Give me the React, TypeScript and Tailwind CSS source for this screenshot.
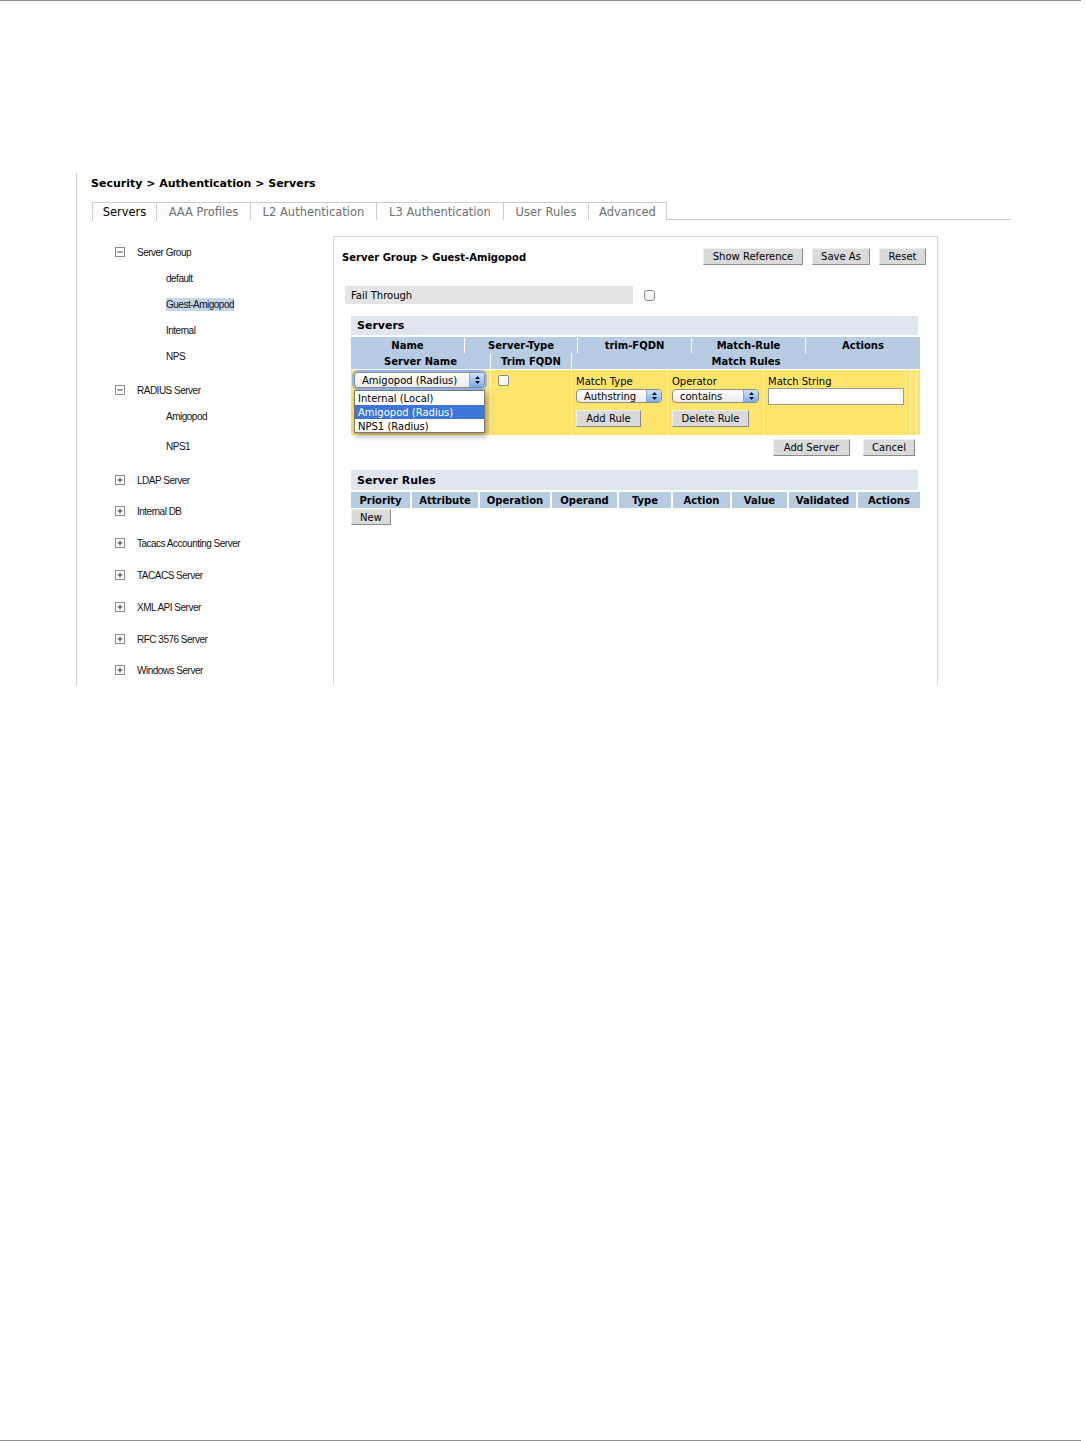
import React from "react";

const VER = "font-['DejaVu_Sans',sans-serif]";
const TAH = "font-['Liberation_Sans',Arial,sans-serif]";

function TreeIcon({ plus }: { plus?: boolean }) {
  return (
    <svg width="10" height="10" viewBox="0 0 10 10" className="shrink-0">
      <rect x="0.5" y="0.5" width="9" height="9" fill="#fff" stroke="#8a8a8a" />
      <line x1="2.5" y1="5" x2="7.5" y2="5" stroke="#333" strokeWidth="1" />
      {plus && <line x1="5" y1="2.5" x2="5" y2="7.5" stroke="#333" strokeWidth="1" />}
    </svg>
  );
}

function Arrows() {
  return (
    <svg width="7" height="10" viewBox="0 0 7 10">
      <path d="M1 4 L3.5 1 L6 4 Z" fill="#111" />
      <path d="M1 6 L3.5 9 L6 6 Z" fill="#111" />
    </svg>
  );
}

function Sel({ cls, text, ring }: { cls: string; text: string; ring?: boolean }) {
  return (
    <div
      className={`relative flex items-center rounded-[4px] border border-[#8c8c8c] bg-gradient-to-b from-white to-[#ebebeb] ${cls} ${
        ring ? "shadow-[0_0_0_2px_#8fb6ee]" : ""
      }`}
    >
      <span className={`${VER} text-[10px] leading-none text-black pl-[7px] pt-px whitespace-nowrap`}>{text}</span>
      <div className="absolute right-0 top-0 bottom-0 w-[15px] rounded-r-[3px] bg-gradient-to-b from-[#cfe3fb] to-[#79acec] border-l border-[#8aa8d0] flex items-center justify-center">
        <Arrows />
      </div>
    </div>
  );
}

function Btn({ cls, children }: { cls: string; children: React.ReactNode }) {
  return (
    <div
      className={`flex items-center justify-center pt-px bg-[#dadada] border border-t-[#efefef] border-l-[#efefef] border-r-[#8a8a8a] border-b-[#8a8a8a] text-black whitespace-nowrap ${VER} text-[10px] leading-none ${cls}`}
    >
      {children}
    </div>
  );
}

function Check({ cls }: { cls?: string }) {
  return (
    <div
      className={`w-[11px] h-[11px] rounded-[2px] border border-[#8a8a8a] bg-gradient-to-b from-white to-[#eeeeee] shrink-0 ${cls ?? ""}`}
    />
  );
}

type TreeItem = { label: string; level: 0 | 1; icon?: "minus" | "plus"; mt: string; sel?: boolean };

const tree: TreeItem[] = [
  { label: "Server Group", level: 0, icon: "minus", mt: "mt-0" },
  { label: "default", level: 1, mt: "mt-[12px]" },
  { label: "Guest-Amigopod", level: 1, mt: "mt-[12px]", sel: true },
  { label: "Internal", level: 1, mt: "mt-[12px]" },
  { label: "NPS", level: 1, mt: "mt-[12px]" },
  { label: "RADIUS Server", level: 0, icon: "minus", mt: "mt-[20px]" },
  { label: "Amigopod", level: 1, mt: "mt-[12px]" },
  { label: "NPS1", level: 1, mt: "mt-[16px]" },
  { label: "LDAP Server", level: 0, icon: "plus", mt: "mt-[20px]" },
  { label: "Internal DB", level: 0, icon: "plus", mt: "mt-[17px]" },
  { label: "Tacacs Accounting Server", level: 0, icon: "plus", mt: "mt-[18px]" },
  { label: "TACACS Server", level: 0, icon: "plus", mt: "mt-[18px]" },
  { label: "XML API Server", level: 0, icon: "plus", mt: "mt-[18px]" },
  { label: "RFC 3576 Server", level: 0, icon: "plus", mt: "mt-[18px]" },
  { label: "Windows Server", level: 0, icon: "plus", mt: "mt-[17px]" },
];

const tabs = [
  { label: "Servers", w: "w-[65px]", active: true },
  { label: "AAA Profiles", w: "w-[94px]" },
  { label: "L2 Authentication", w: "w-[126px]" },
  { label: "L3 Authentication", w: "w-[127px]" },
  { label: "User Rules", w: "w-[85px]" },
  { label: "Advanced", w: "w-[78px]" },
];

const ruleCols = [
  { label: "Priority", w: "w-[61px]" },
  { label: "Attribute", w: "w-[68px]" },
  { label: "Operation", w: "w-[72px]" },
  { label: "Operand", w: "w-[67px]" },
  { label: "Type", w: "w-[54px]" },
  { label: "Action", w: "w-[59px]" },
  { label: "Value", w: "w-[57px]" },
  { label: "Validated", w: "w-[69px]" },
  { label: "Actions", w: "w-[62px]" },
];

export default function App() {
  return (
    <div className="w-[1085px] h-[1441px] bg-white flex flex-col overflow-hidden">
      <div className="h-px w-[1081px] bg-[#8e8e8e] shrink-0" />

      <div className="ml-[76px] mt-[172px] h-[512px] border-l border-[#d0d0d0] pl-[15px] shrink-0">
        {/* breadcrumb */}
        <div className={`${VER} pt-[4px] -ml-px h-[18px] text-[11px] leading-[14px] font-bold text-black whitespace-nowrap`}>
          Security &gt; Authentication &gt; Servers
        </div>

        {/* tabs */}
        <div className="mt-[11px] w-[918px] h-[18px] flex border-b border-[#cccccc]">
          {tabs.map((t, i) => (
            <div
              key={t.label}
              className={`${t.w} ${
                t.active ? "h-[19px] bg-white text-black" : "h-[18px] bg-white text-[#6f6f6f]"
              } ${i === 0 ? "border-l" : ""} border-t border-r border-[#cccccc] flex items-center justify-center pt-[2px] ${VER} text-[11.5px] leading-none whitespace-nowrap`}
            >
              {t.label}
            </div>
          ))}
        </div>

        <div className="flex">
          {/* left tree */}
          <div className={`w-[241px] pt-[25px] ${TAH} text-[10px] tracking-[-0.5px] text-[#111]`}>
            {tree.map((it) => (
              <div
                key={it.label}
                className={`${it.mt} h-[14px] flex items-center ${it.level === 0 ? "pl-[23px]" : "pl-[74px]"}`}
              >
                {it.icon && <TreeIcon plus={it.icon === "plus"} />}
                <span
                  className={`${it.icon ? "ml-[12px]" : ""} ${it.sel ? "bg-[#c5d6ea]" : ""} leading-[13px] whitespace-nowrap`}
                >
                  {it.label}
                </span>
              </div>
            ))}
          </div>

          {/* right panel */}
          <div className="mt-[16px] w-[605px] h-[449px] border-t border-l border-r border-[#d6d6d6]">
            <div className="mt-[11px] h-[17px] flex items-center justify-between pl-[8px] pr-[11px]">
              <span className={`${VER} text-[10px] pt-px font-bold text-black whitespace-nowrap`}>
                Server Group &gt; Guest-Amigopod
              </span>
              <div className="flex gap-[9px]">
                <Btn cls="w-[100px] h-[17px]">Show Reference</Btn>
                <Btn cls="w-[58px] h-[17px]">Save As</Btn>
                <Btn cls="w-[47px] h-[17px]">Reset</Btn>
              </div>
            </div>

            {/* fail through */}
            <div className="mt-[21px] ml-[11px] flex items-center">
              <div className={`w-[288px] h-[18px] bg-[#e4e4e4] flex items-center pl-[6px] pt-px ${VER} text-[10px] text-black`}>
                Fail Through
              </div>
              <Check cls="ml-[11px] rounded-[3px]" />
            </div>

            <div className="ml-[17px]">
              {/* servers bar */}
              <div className={`mt-[12px] w-[567px] h-[19px] bg-[#dfe6ef] flex items-center pl-[6px] pt-[2px] ${VER} text-[11px] font-bold text-black`}>
                Servers
              </div>

              {/* table header row 1 */}
              <div className={`mt-[2px] w-[569px] h-[16px] bg-[#b7cbe3] flex ${VER} text-[10px] font-bold text-black`}>
                <div className="w-[114px] border-r border-white flex items-center justify-center pt-px">Name</div>
                <div className="w-[113px] border-r border-white flex items-center justify-center pt-px">Server-Type</div>
                <div className="w-[114px] border-r border-white flex items-center justify-center pt-px">trim-FQDN</div>
                <div className="w-[114px] border-r border-white flex items-center justify-center pt-px">Match-Rule</div>
                <div className="w-[114px] flex items-center justify-center pt-px">Actions</div>
              </div>
              {/* table header row 2 */}
              <div className={`w-[569px] h-[16px] bg-[#b7cbe3] flex ${VER} text-[10px] font-bold text-black`}>
                <div className="w-[140px] border-r border-white flex items-center justify-center pt-px">Server Name</div>
                <div className="w-[81px] border-r border-white flex items-center justify-center pt-px">Trim FQDN</div>
                <div className="w-[348px] flex items-center justify-center pt-px">Match Rules</div>
              </div>

              {/* yellow edit row */}
              <div className={`mt-px w-[569px] h-[65px] bg-[#fde46c] flex ${VER} text-[10px] text-black`}>
                <div className="relative w-[140px] border-r border-[#fff1a8] pt-[2px] pl-[3px]">
                  <Sel cls="w-[131px] h-[16px]" text="Amigopod (Radius)" ring />
                  <div className="absolute top-[20px] left-[3px] w-[131px] h-[43px] bg-white border border-[#777] shadow-[2px_3px_6px_rgba(0,0,0,0.35)] z-10 flex flex-col">
                    <div className="h-[14px] flex items-center pl-[3px] pt-px whitespace-nowrap">Internal (Local)</div>
                    <div className="h-[14px] flex items-center pl-[3px] pt-px bg-[#3b76d8] text-white whitespace-nowrap">Amigopod (Radius)</div>
                    <div className="h-[13px] flex items-center pl-[3px] pt-px whitespace-nowrap">NPS1 (Radius)</div>
                  </div>
                </div>
                <div className="w-[81px] border-r border-[#fff1a8] pt-[5px] pl-[7px]">
                  <Check />
                </div>
                <div className="w-[96px] border-r border-[#fff1a8] pt-[6px] pl-[4px]">
                  <div className="h-[12px] leading-[12px] whitespace-nowrap">Match Type</div>
                  <Sel cls="mt-[1px] w-[86px] h-[14px]" text="Authstring" />
                  <Btn cls="mt-[7px] w-[65px] h-[17px]">Add Rule</Btn>
                </div>
                <div className="w-[96px] border-r border-[#fff1a8] pt-[6px] pl-[4px]">
                  <div className="h-[12px] leading-[12px] whitespace-nowrap">Operator</div>
                  <Sel cls="mt-[1px] w-[87px] h-[14px]" text="contains" />
                  <Btn cls="mt-[7px] w-[77px] h-[17px]">Delete Rule</Btn>
                </div>
                <div className="w-[147px] border-r border-[#fff1a8] pt-[6px] pl-[4px]">
                  <div className="h-[12px] leading-[12px] whitespace-nowrap">Match String</div>
                  <div className="w-[136px] h-[17px] bg-white border border-[#9a9a9a]" />
                </div>
                <div className="w-[6px] border-r border-[#fff1a8]" />
                <div className="w-[3px]" />
              </div>

              {/* add server / cancel */}
              <div className="mt-[4px] w-[569px] flex justify-end pr-[5px] gap-[13px]">
                <Btn cls="w-[77px] h-[17px]">Add Server</Btn>
                <Btn cls="w-[52px] h-[17px]">Cancel</Btn>
              </div>

              {/* server rules */}
              <div className={`mt-[14px] w-[567px] h-[20px] bg-[#dfe6ef] flex items-center pl-[6px] pt-[2px] ${VER} text-[11px] font-bold text-black`}>
                Server Rules
              </div>
              <div className={`mt-[2px] w-[569px] h-[16px] bg-[#b7cbe3] flex ${VER} text-[10px] font-bold text-black`}>
                {ruleCols.map((c, i) => (
                  <div
                    key={c.label}
                    className={`${c.w} ${i < ruleCols.length - 1 ? "border-r-2 border-white" : ""} flex items-center justify-center pt-px whitespace-nowrap`}
                  >
                    {c.label}
                  </div>
                ))}
              </div>
              <Btn cls="mt-px w-[40px] h-[16px]">New</Btn>
            </div>
          </div>
        </div>
      </div>

      <div className="flex-1" />
      <div className="h-px w-[1081px] bg-[#8e8e8e] shrink-0" />
    </div>
  );
}
